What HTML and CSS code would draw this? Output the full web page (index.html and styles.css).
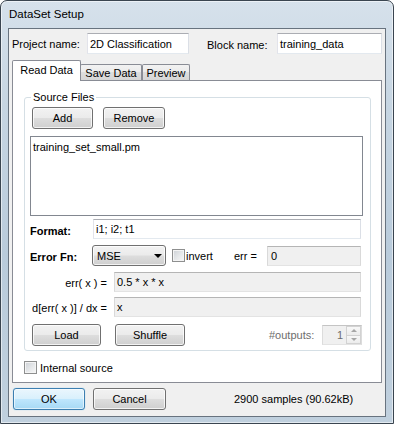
FILE: index.html
```html
<!DOCTYPE html>
<html lang="en">

<head>
    <meta charset="UTF-8">
    <title>DataSet Setup</title>
    <link rel="stylesheet" href="styles.css">
</head>

<body>
    <div class="window">
        <div class="titlebar">DataSet Setup</div>
        <div class="client">
            <div class="names">
                <span class="lbl projectLbl">Project name:</span>
                <div class="edit projectEdit">2D Classification</div>
                <span class="lbl blockLbl">Block name:</span>
                <div class="edit blockEdit">training_data</div>
            </div>
            <div class="tabs">
                <div class="tab active readTab">Read Data</div>
                <div class="tab saveTab">Save Data</div>
                <div class="tab previewTab">Preview</div>
            </div>
            <div class="panel">
                <fieldset class="group">
                    <legend>Source Files</legend>
                    <div class="btnRow">
                        <div class="btn addBtn">Add</div>
                        <div class="btn removeBtn">Remove</div>
                    </div>
                    <div class="listBox">training_set_small.pm</div>
                    <div class="row formatRow">
                        <span class="bold formatLbl">Format:</span>
                        <div class="edit formatEdit">i1; i2; t1</div>
                    </div>
                    <div class="row errRow">
                        <span class="bold errFnLbl">Error Fn:</span>
                        <div class="combo">
                            <span>MSE</span>
                            <span class="arrow"></span>
                        </div>
                        <span class="check invertCheck"></span>
                        <span class="invertLbl">invert</span>
                        <span class="errLbl">err =</span>
                        <div class="edit disabled errEdit">0</div>
                    </div>
                    <div class="row funcRow">
                        <span class="funcLbl">err( x ) =</span>
                        <div class="edit disabled funcEdit">0.5 * x * x</div>
                    </div>
                    <div class="row funcRow derivRow">
                        <span class="funcLbl">d[err( x )] / dx =</span>
                        <div class="edit disabled funcEdit">x</div>
                    </div>
                    <div class="btnRow loadRow">
                        <div class="btn loadBtn">Load</div>
                        <div class="btn shuffleBtn">Shuffle</div>
                        <span class="outputsLbl">#outputs:</span>
                        <div class="spin">
                            <span class="spinVal">1</span>
                            <div class="spinBtns">
                                <span class="spinUp"></span>
                                <span class="spinDown"></span>
                            </div>
                        </div>
                    </div>
                </fieldset>
                <div class="internalRow">
                    <span class="check"></span>
                    <span class="internalLbl">Internal source</span>
                </div>
            </div>
            <div class="footer">
                <div class="btn default okBtn">OK</div>
                <div class="btn cancelBtn">Cancel</div>
                <span class="status">2900 samples (90.62kB)</span>
            </div>
        </div>
    </div>
</body>

</html>
```

FILE: styles.css
```css
* {
    box-sizing: border-box;
}

body {
    margin: 0;
    padding: 0;
    font-family: "Liberation Sans", Arial, sans-serif;
    font-size: 11px;
    color: #000;
    background: #fff;
}

.window {
    width: 394px;
    height: 424px;
    border: 1px solid #3a4550;
    border-radius: 7px 7px 0 0;
    padding: 0 7px 6px 7px;
    background: linear-gradient(to bottom, #d6e1eb 0%, #c6d5e2 25%, #b9cbdb 60%, #c0d0de 100%);
    box-shadow: inset 0 0 0 1px rgba(255, 255, 255, 0.55);
    display: flex;
    flex-direction: column;
}

.titlebar {
    height: 27px;
    padding: 7px 0 0 1px;
    font-size: 11.5px;
    line-height: 13px;
}

.client {
    height: 389px;
    border: 1px solid #68737f;
    background: #f0f0f0;
    display: flex;
    flex-direction: column;
}

/* name row */
.names {
    display: flex;
    align-items: center;
    height: 21px;
    margin-top: 4px;
    padding-left: 3px;
}

.projectLbl {
    width: 75px;
}

.blockLbl {
    width: 70px;
    margin-left: 18px;
    padding-top: 2px;
}

.edit {
    height: 21px;
    border: 1px solid;
    border-color: #abadb3 #dbdfe6 #e3e9ef #e2e3ea;
    background: #fff;
    padding: 0 2px;
    display: flex;
    align-items: center;
    white-space: nowrap;
}

.projectEdit {
    width: 102px;
}

.blockEdit {
    width: 105px;
}

/* tabs */
.tabs {
    display: flex;
    align-items: flex-end;
    height: 20px;
    margin: 6px 0 0 3px;
}

.tab {
    height: 16px;
    border: 1px solid #898c95;
    border-bottom: none;
    border-radius: 2px 2px 0 0;
    background: linear-gradient(to bottom, #f2f2f2 0%, #ebebeb 50%, #dedede 50%, #d6d6d6 100%);
    display: flex;
    align-items: center;
    justify-content: center;
    padding-top: 1px;
}

.tab.active {
    height: 21px;
    margin-bottom: -1px;
    background: #fff;
    position: relative;
    z-index: 1;
    align-items: flex-start;
    padding-top: 3px;
}

.readTab {
    width: 69px;
}

.saveTab {
    width: 62px;
    margin-left: -1px;
}

.previewTab {
    width: 48px;
}

.panel {
    height: 303px;
    margin: 0 3px;
    border: 1px solid #898c95;
    background: #fff;
    padding: 10px 10px 0 11px;
}

/* group box */
.group {
    width: 347px;
    margin: 0;
    border: 1px solid #d5dfe5;
    border-radius: 3px;
    padding: 3px 6px 4px 6px;
}

.group legend {
    padding: 0 2px;
    line-height: 13px;
}

.btnRow {
    display: flex;
    align-items: center;
    height: 22px;
    margin-left: 1px;
}

.btn {
    height: 22px;
    border: 1px solid #707070;
    border-radius: 3px;
    background: linear-gradient(to bottom, #f2f2f2 0%, #ebebeb 48%, #dddddd 52%, #cfcfcf 100%);
    box-shadow: inset 0 0 0 1px rgba(255, 255, 255, 0.75);
    display: flex;
    align-items: center;
    justify-content: center;
}

.btn.default {
    border-color: #3c7fb1;
    background: linear-gradient(to bottom, #eaf6fd 0%, #d9f0fc 48%, #bee6fd 52%, #a7d9f5 100%);
    box-shadow: inset 0 0 0 1px rgba(255, 255, 255, 0.6), 0 0 1px #6ec3ee;
}

.addBtn {
    width: 61px;
}

.removeBtn {
    width: 62px;
    margin-left: 10px;
}

.listBox {
    width: 333px;
    height: 80px;
    margin: 7px 0 0 -1px;
    border: 1px solid #828790;
    padding: 4px 2px;
    line-height: 13px;
}

.row {
    display: flex;
    align-items: center;
    margin-left: -1px;
}

.bold {
    font-weight: bold;
}

.formatRow {
    height: 20px;
    margin-top: 3px;
}

.formatLbl {
    width: 63px;
    padding-top: 3px;
}

.formatEdit {
    width: 268px;
    height: 20px;
}

.errRow {
    height: 21px;
    margin-top: 6px;
}

.errFnLbl {
    width: 62px;
    padding-top: 2px;
}

.combo {
    width: 74px;
    height: 21px;
    border: 1px solid #707070;
    border-radius: 3px;
    background: linear-gradient(to bottom, #f2f2f2 0%, #ebebeb 48%, #dddddd 52%, #cfcfcf 100%);
    box-shadow: inset 0 0 0 1px rgba(255, 255, 255, 0.75);
    display: flex;
    align-items: center;
    justify-content: space-between;
    padding: 0 3px 0 4px;
}

.arrow {
    width: 0;
    height: 0;
    border-left: 4px solid transparent;
    border-right: 4px solid transparent;
    border-top: 4px solid #000;
    margin-top: 1px;
}

.check {
    width: 13px;
    height: 13px;
    flex: none;
    border: 1px solid #8e8f8f;
    background: linear-gradient(135deg, #cdd1d6 0%, #e6e8ea 55%, #f7f7f7 100%);
    box-shadow: inset 0 0 0 1px #f4f4f4;
}

.invertCheck {
    margin-left: 6px;
}

.invertLbl {
    width: 48px;
    margin-left: 1px;
}

.errLbl {
    width: 33px;
}

.edit.disabled {
    background: #f0f0f0;
    border-color: #b5b5b5 #d9d9d9 #e3e3e3 #d9d9d9;
}

.errEdit {
    width: 94px;
    height: 20px;
    padding-left: 3px;
}

.funcRow {
    height: 20px;
    margin-top: 6px;
}

.derivRow {
    margin-top: 5px;
}

.funcLbl {
    width: 77px;
    text-align: right;
    padding-top: 2px;
}

.funcEdit {
    width: 247px;
    height: 20px;
    margin-left: 7px;
}

.loadRow {
    margin-top: 7px;
}

.loadBtn {
    width: 69px;
}

.shuffleBtn {
    width: 70px;
    margin-left: 14px;
}

.outputsLbl {
    width: 53px;
    margin-left: 84px;
    color: #6d6d6d;
}

.spin {
    width: 40px;
    height: 20px;
    border: 1px solid;
    border-color: #c4c4c4 #dcdcdc #e3e3e3 #dcdcdc;
    background: #f0f0f0;
    display: flex;
    align-items: center;
    justify-content: flex-end;
    color: #6d6d6d;
}

.spinVal {
    padding-right: 3px;
}

.spinBtns {
    width: 15px;
    height: 18px;
    display: flex;
    flex-direction: column;
}

.spinUp,
.spinDown {
    flex: 1;
    border: 1px solid #d2d2d2;
    background: linear-gradient(to bottom, #f8f8f8, #ececec);
    display: flex;
    align-items: center;
    justify-content: center;
}

.spinDown {
    border-top: none;
}

.spinUp::after,
.spinDown::after {
    content: "";
    width: 0;
    height: 0;
    border-left: 3px solid transparent;
    border-right: 3px solid transparent;
}

.spinUp::after {
    border-bottom: 3px solid #a6a6a6;
}

.spinDown::after {
    border-top: 3px solid #a6a6a6;
}

.internalRow {
    display: flex;
    align-items: center;
    height: 13px;
    margin-top: 10px;
}

.internalLbl {
    margin-left: 3px;
}

/* bottom buttons */
.footer {
    display: flex;
    align-items: center;
    height: 22px;
    margin-top: 5px;
}

.okBtn {
    width: 72px;
    margin-left: 4px;
}

.cancelBtn {
    width: 73px;
    margin-left: 8px;
}

.status {
    margin-left: 68px;
}
```
